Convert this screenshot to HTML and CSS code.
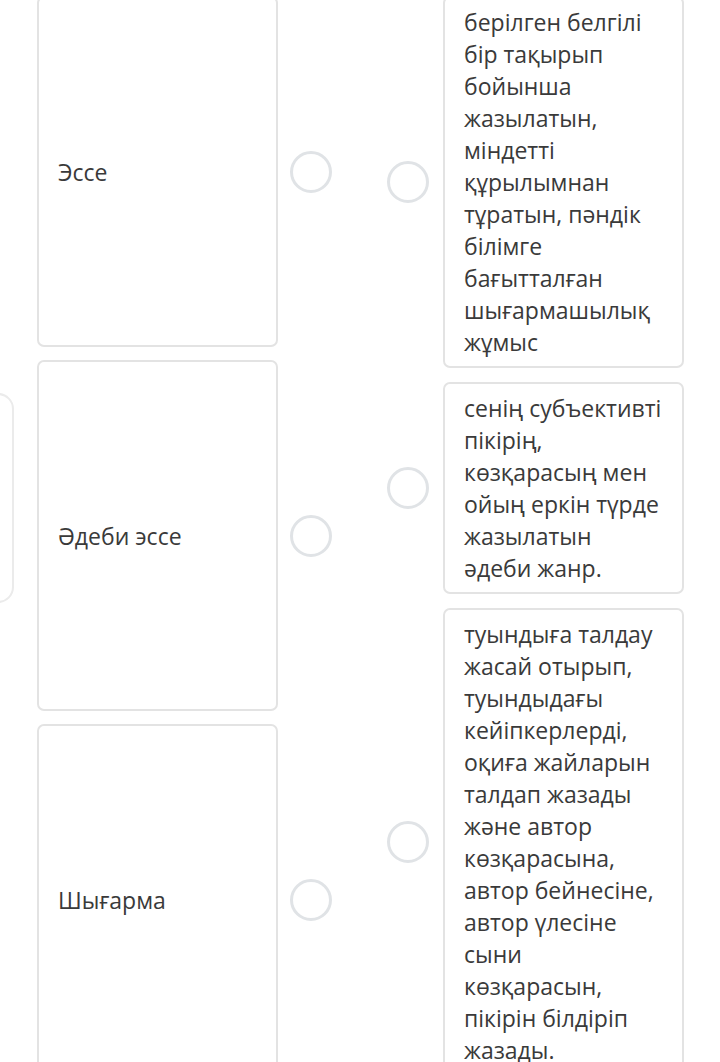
FILE: index.html
```html
<!DOCTYPE html>
<html lang="kk">
<head>
<meta charset="utf-8">
<title>Сәйкестендіру</title>
<link rel="stylesheet" href="styles.css">
</head>
<body>
<main class="board">
  <div class="side"><div class="ghost"></div></div>
  <div class="col col-left">
    <div class="item">
      <div class="card term">Эссе</div>
      <span class="radio"></span>
    </div>
    <div class="item">
      <div class="card term">Әдеби эссе</div>
      <span class="radio"></span>
    </div>
    <div class="item">
      <div class="card term">Шығарма</div>
      <span class="radio"></span>
    </div>
  </div>
  <div class="col col-right">
    <div class="item">
      <span class="radio"></span>
      <div class="card def">берілген белгілі бір тақырып бойынша жазылатын, міндетті құрылымнан тұратын, пәндік білімге бағытталған шығармашылық жұмыс</div>
    </div>
    <div class="item">
      <span class="radio"></span>
      <div class="card def">сенің субъективті пікірің, көзқарасың мен ойың еркін түрде жазылатын әдеби жанр.</div>
    </div>
    <div class="item">
      <span class="radio"></span>
      <div class="card def">туындыға талдау жасай отырып, туындыдағы кейіпкерлерді, оқиға жайларын талдап жазады және автор көзқарасына, автор бейнесіне, автор үлесіне сыни көзқарасын, пікірін білдіріп жазады.</div>
    </div>
  </div>
</main>
</body>
</html>
```

FILE: styles.css
```css
html, body {
  margin: 0;
  padding: 0;
  background: #ffffff;
}
body {
  font-family: "Open Sans", "Noto Sans", sans-serif;
  color: #3a3a3a;
  overflow: hidden;
}
.board {
  display: flex;
  align-items: flex-start;
  margin-top: -4px;
}
.side {
  width: 37px;
  flex-shrink: 0;
  padding-top: 397px;
}
.ghost {
  width: 40px;
  height: 210px;
  margin-left: -26px;
  border: 2px solid #ebebeb;
  border-radius: 16px;
  box-sizing: border-box;
}
.col {
  display: flex;
  flex-direction: column;
  gap: 13px;
}
.col-left {
  width: 295px;
}
.col-right {
  margin-left: 55px;
  gap: 14px;
}
.item {
  display: flex;
  align-items: center;
  gap: 12px;
}
.col-right .item {
  gap: 14px;
}
.card {
  box-sizing: border-box;
  width: 241px;
  flex-shrink: 0;
  border: 2px solid #e3e3e3;
  border-radius: 7px;
  background: #fff;
  font-size: 23px;
  line-height: 32px;
}
.term {
  height: 351px;
  display: flex;
  align-items: center;
  padding: 0 19px;
}
.def {
  padding: 8px 19px 8px 19px;
}
.radio {
  width: 42px;
  height: 42px;
  box-sizing: border-box;
  border: 3px solid #e0e3e6;
  border-radius: 50%;
  flex-shrink: 0;
}
```
